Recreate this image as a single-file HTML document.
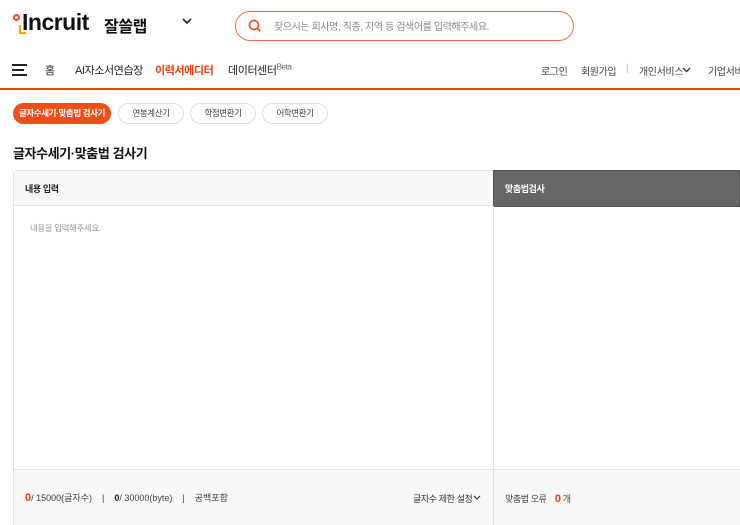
<!DOCTYPE html>
<html style="overflow:hidden;width:740px;height:525px"><head><meta charset="utf-8"><style>
*{margin:0;padding:0;box-sizing:border-box}
body{width:740px;height:525px;overflow:hidden;background:#fff;font-family:"Liberation Sans","Noto Sans CJK KR",sans-serif;color:#222;position:relative;letter-spacing:-0.4px}
.a{position:absolute;white-space:nowrap}
</style></head><body>
<div class="a" style="left:13px;top:14px;width:7px;height:7px;border:2px solid #f04e23;border-radius:50%"></div>
<div class="a" style="left:19px;top:25px;width:7px;height:9px;border-left:2.5px solid #f6a800;border-bottom:2.5px solid #f6a800"></div>
<div class="a" style="left:22px;top:9px;font:bold 23px 'Liberation Sans',sans-serif;letter-spacing:-0.5px;color:#111">Incruit</div>
<div class="a" style="left:104px;top:13px;font-size:16px;font-weight:bold;color:#111">잘쓸랩</div>
<svg class="a" style="left:182px;top:18px" width="10" height="7" viewBox="0 0 10 7"><path d="M1 1l4 4 4-4" fill="none" stroke="#222" stroke-width="1.6"/></svg>
<div class="a" style="left:235px;top:11px;width:339px;height:30px;border:1.5px solid #f46a3e;border-radius:15px"></div>
<svg class="a" style="left:248px;top:19px" width="14" height="14" viewBox="0 0 14 14"><circle cx="6" cy="6" r="4.5" fill="none" stroke="#f04e23" stroke-width="1.7"/><path d="M9.3 9.3l3 3" stroke="#f04e23" stroke-width="1.7"/></svg>
<div class="a" style="left:274px;top:18px;font-size:10px;color:#888">찾으시는 회사명, 직종, 지역 등 검색어를 입력해주세요.</div>
<div class="a" style="left:12px;top:64px;width:15px;height:2px;background:#222"></div>
<div class="a" style="left:12px;top:69px;width:12px;height:2px;background:#222"></div>
<div class="a" style="left:12px;top:74px;width:15px;height:2px;background:#222"></div>
<div class="a" style="left:45px;top:62px;font-size:11px">홈</div>
<div class="a" style="left:75px;top:62px;font-size:11px">AI자소서연습장</div>
<div class="a" style="left:155px;top:62px;font-size:11px;color:#f03c0f;font-weight:bold">이력서에디터</div>
<div class="a" style="left:228px;top:62px;font-size:11px">데이터센터<sup style="font-size:8px;color:#666">Beta</sup></div>
<div class="a" style="left:541px;top:63px;font-size:10px;color:#444">로그인</div>
<div class="a" style="left:581px;top:63px;font-size:10px;color:#444">회원가입</div>
<div class="a" style="left:626px;top:63px;font-size:10px;color:#bbb">|</div>
<div class="a" style="left:639px;top:63px;font-size:10px;color:#444">개인서비스</div>
<svg class="a" style="left:682px;top:67px" width="9" height="6" viewBox="0 0 9 6"><path d="M1 1l3.5 3.5L8 1" fill="none" stroke="#333" stroke-width="1.4"/></svg>
<div class="a" style="left:708px;top:63px;font-size:10px;color:#444">기업서비스</div>
<div class="a" style="left:0;top:88px;width:740px;height:2px;background:#f03c0f"></div>
<div class="a" style="left:13px;top:103px;width:98px;height:21px;border-radius:11px;background:#f04e16;color:#fff;font-size:8.5px;font-weight:bold;text-align:center;line-height:21px">글자수세기·맞춤법 검사기</div>
<div class="a" style="left:118px;top:103px;width:66px;height:21px;border-radius:11px;border:1px solid #ddd;color:#444;font-size:8.5px;text-align:center;line-height:19px">연봉계산기</div>
<div class="a" style="left:190px;top:103px;width:66px;height:21px;border-radius:11px;border:1px solid #ddd;color:#444;font-size:8.5px;text-align:center;line-height:19px">학점변환기</div>
<div class="a" style="left:262px;top:103px;width:66px;height:21px;border-radius:11px;border:1px solid #ddd;color:#444;font-size:8.5px;text-align:center;line-height:19px">어학변환기</div>
<div class="a" style="left:13px;top:143px;font-size:13px;font-weight:bold;color:#111">글자수세기·맞춤법 검사기</div>
<div class="a" style="left:13px;top:170px;width:481px;height:355px;border:1px solid #e2e2e2;border-bottom:none;border-radius:4px 0 0 0"></div>
<div class="a" style="left:14px;top:171px;width:479px;height:35px;background:#f8f8f8;border-bottom:1px solid #e2e2e2"></div>
<div class="a" style="left:25px;top:182px;font-size:9px;font-weight:bold;color:#222">내용 입력</div>
<div class="a" style="left:30px;top:222px;font-size:8.5px;color:#999">내용을 입력해주세요.</div>
<div class="a" style="left:493px;top:170px;width:247px;height:37px;background:#666;border:1px solid #555"></div>
<div class="a" style="left:505px;top:182px;font-size:9px;font-weight:bold;color:#fff">맞춤법검사</div>
<div class="a" style="left:493px;top:206px;width:1px;height:319px;background:#e2e2e2"></div>
<div class="a" style="left:14px;top:469px;width:726px;height:56px;background:#f8f8f8;border-top:1px solid #e2e2e2"></div>
<div class="a" style="left:493px;top:469px;width:1px;height:56px;background:#e2e2e2"></div>
<div class="a" style="left:25px;top:491px;font-size:9px;color:#444;letter-spacing:0"><b style="color:#f03c0f;font-size:11px">0</b>/ 15000(글자수) &nbsp;&nbsp; | &nbsp;&nbsp; <b style="color:#222">0</b>/ 30000(byte) &nbsp;&nbsp; | &nbsp;&nbsp; 공백포함</div>
<div class="a" style="left:413px;top:492px;font-size:9px;color:#333">글자수 제한 설정</div>
<svg class="a" style="left:473px;top:495px" width="8" height="6" viewBox="0 0 8 6"><path d="M1 1l3 3 3-3" fill="none" stroke="#333" stroke-width="1.2"/></svg>
<div class="a" style="left:505px;top:492px;font-size:9px;color:#444">맞춤법 오류 &nbsp;&nbsp;&nbsp;<b style="color:#f03c0f;font-size:11px">0</b> 개</div>
</body></html>
